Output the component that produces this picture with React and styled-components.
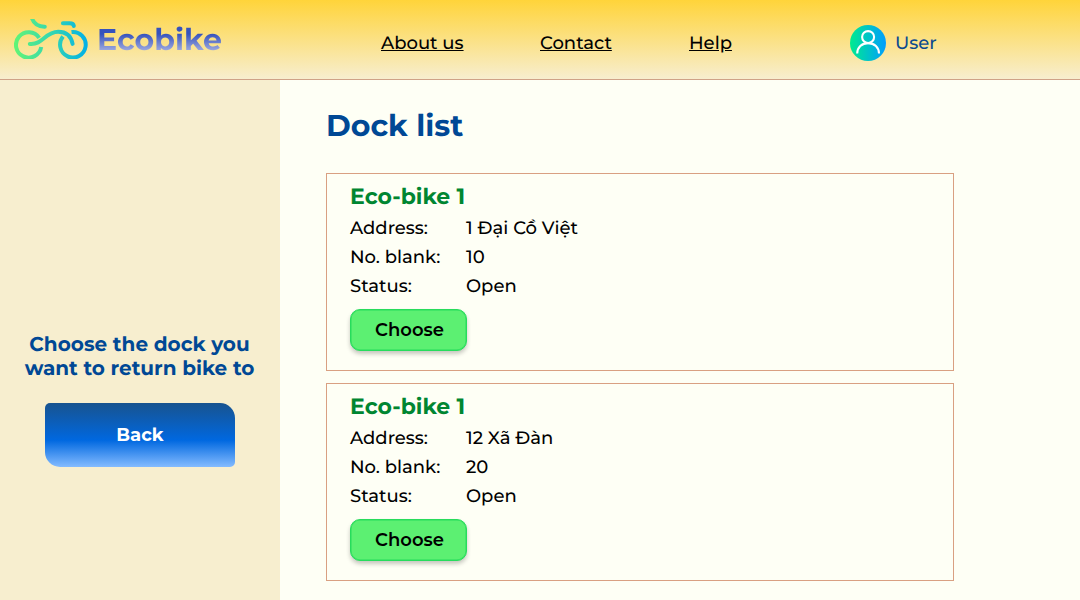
import React from "react";
import styled, { createGlobalStyle } from "styled-components";

const GlobalStyle = createGlobalStyle`
  * { box-sizing: border-box; }
  body {
    margin: 0;
    overflow: hidden;
    background: #fefff5;
    color: #000;
    font-family: Montserrat, Inter, "Noto Sans", sans-serif;
    font-weight: 500;
    text-rendering: geometricPrecision;
    -webkit-font-smoothing: antialiased;
  }
`;

const Page = styled.div`
  height: 600px;
  display: flex;
  flex-direction: column;
`;

const Header = styled.header`
  height: 80px;
  flex: none;
  display: flex;
  align-items: center;
  padding: 7px 14px 0;
  background: linear-gradient(180deg, #ffd43a 0%, #f7eecf 100%);
  border-bottom: 1px solid #cfa287;
`;

const Brand = styled.div`
  display: flex;
  align-items: center;
  width: 367px;
  gap: 9px;
  svg { display: block; margin-bottom: 9px; }
`;

const BrandName = styled.span`
  font-size: 30px;
  line-height: 37px;
  font-weight: 700;
  margin-bottom: 8px;
  color: transparent;
  background: linear-gradient(180deg, #3552bd 35%, #a9b3e3 85%);
  background-clip: text;
  -webkit-background-clip: text;
`;

const Nav = styled.nav`
  display: flex;
  width: 469px;
`;

const NavLink = styled.a`
  width: ${(p) => p.$slot}px;
  font-size: 18px;
  line-height: 22px;
  white-space: nowrap;
  text-decoration: underline;
`;

const User = styled.div`
  display: flex;
  align-items: center;
  gap: 9px;
  color: #0b4a8f;
  font-size: 18px;
  line-height: 22px;
  svg { display: block; }
`;

const Body = styled.div`
  flex: 1;
  min-height: 0;
  display: flex;
`;

const Sidebar = styled.aside`
  width: 280px;
  background: #f7eecf;
  display: flex;
  flex-direction: column;
  align-items: center;
  padding-top: 253px;
`;

const Prompt = styled.p`
  margin: 0 1px 22px 0;
  text-align: center;
  white-space: nowrap;
  font-size: 20px;
  line-height: 24px;
  font-weight: 700;
  color: #004895;
`;

const BackButton = styled.button`
  width: 190px;
  height: 64px;
  border: 0;
  padding: 0;
  border-radius: 5px 15px 5px 15px;
  background: linear-gradient(180deg, #18538f 0%, #0068e0 58%, #84bbff 100%);
  color: #fff;
  font: inherit;
  font-size: 18px;
  line-height: 22px;
  font-weight: 700;
`;

const Main = styled.main`
  flex: 1;
  padding: 27px 126px 0 46px;
`;

const Title = styled.h1`
  margin: 0 0 29px;
  font-size: 30px;
  line-height: 37px;
  font-weight: 700;
  color: #004895;
`;

const Card = styled.section`
  height: 198px;
  margin-bottom: 12px;
  padding: 9px 23px;
  border: 1px solid #d9a082;
`;

const DockName = styled.h2`
  margin: 0 0 4px;
  font-size: 22px;
  line-height: 27px;
  font-weight: 700;
  color: #008631;
`;

const Row = styled.div`
  display: grid;
  grid-template-columns: 116px 1fr;
  font-size: 18px;
  line-height: 29px;
`;

const ChooseButton = styled.button`
  display: block;
  width: 117px;
  height: 42px;
  margin-top: 8px;
  padding: 0 0 0 2px;
  border: 1.5px solid #27dc5c;
  border-radius: 10px;
  background: #5cf072;
  box-shadow: inset 0 0 0 0.5px #27dc5c, 0 3px 4px rgba(0, 0, 0, 0.22);
  font: inherit;
  font-size: 18px;
  line-height: 22px;
  font-weight: 600;
  color: #000;
`;

const BikeLogo = () => (
  <svg width="74" height="40" viewBox="14 19 74 40" fill="none">
    <defs>
      <linearGradient id="bike" gradientUnits="userSpaceOnUse" x1="14" y1="0" x2="88" y2="0">
        <stop offset="0" stopColor="#63f574" />
        <stop offset="0.5" stopColor="#35d7b1" />
        <stop offset="1" stopColor="#00afe8" />
      </linearGradient>
    </defs>
    <g stroke="url(#bike)" strokeWidth="4">
      <path d="M39.2 37.8A12.7 12.7 0 1 0 41.2 47" />
      <path d="M63 36.6A12.8 12.8 0 1 0 71.5 32" />
      <path d="M29.8 43.9C43 45 45 31.8 58.2 31.8C68.5 31.8 71.5 38.3 72.6 43.9" strokeLinecap="round" />
      <path d="M32.2 18.9C34.2 24.2 38.6 26.8 44.8 26.7" strokeLinecap="round" />
      <path d="M62.9 23.3H69.5C72 23.3 73.6 24.2 73.8 26" strokeLinecap="round" />
    </g>
  </svg>
);

const Avatar = () => (
  <svg width="36" height="36" viewBox="0 0 36 36" fill="none">
    <defs>
      <linearGradient id="avatar" x1="0" y1="0" x2="1" y2="0">
        <stop offset="0" stopColor="#00eb8e" />
        <stop offset="1" stopColor="#009dff" />
      </linearGradient>
    </defs>
    <circle cx="18" cy="18" r="18" fill="url(#avatar)" />
    <g stroke="#fff" strokeWidth="2.1">
      <circle cx="18.1" cy="12.1" r="6" />
      <path d="M7.2 28.5C7.2 22.5 11.8 18.1 18.1 18.1S29 22.5 29 28.5" />
    </g>
  </svg>
);

const links = [
  { label: "About us", slot: 159 },
  { label: "Contact", slot: 149 },
  { label: "Help", slot: 100 },
];

const docks = [
  { address: "1 Đại Cồ Việt", blank: "10", status: "Open" },
  { address: "12 Xã Đàn", blank: "20", status: "Open" },
];

const Field = ({ label, value }) => (
  <Row>
    <span>{label}</span>
    <span>{value}</span>
  </Row>
);

export default function App() {
  return (
    <Page>
      <GlobalStyle />
      <Header>
        <Brand>
          <BikeLogo />
          <BrandName>Ecobike</BrandName>
        </Brand>
        <Nav>
          {links.map((l) => (
            <NavLink key={l.label} $slot={l.slot}>{l.label}</NavLink>
          ))}
        </Nav>
        <User>
          <Avatar />
          User
        </User>
      </Header>
      <Body>
        <Sidebar>
          <Prompt>
            Choose the dock you
            <br />
            want to return bike to
          </Prompt>
          <BackButton>Back</BackButton>
        </Sidebar>
        <Main>
          <Title>Dock list</Title>
          {docks.map((d) => (
            <Card key={d.address}>
              <DockName>Eco-bike 1</DockName>
              <Field label="Address:" value={d.address} />
              <Field label="No. blank:" value={d.blank} />
              <Field label="Status:" value={d.status} />
              <ChooseButton>Choose</ChooseButton>
            </Card>
          ))}
        </Main>
      </Body>
    </Page>
  );
}
